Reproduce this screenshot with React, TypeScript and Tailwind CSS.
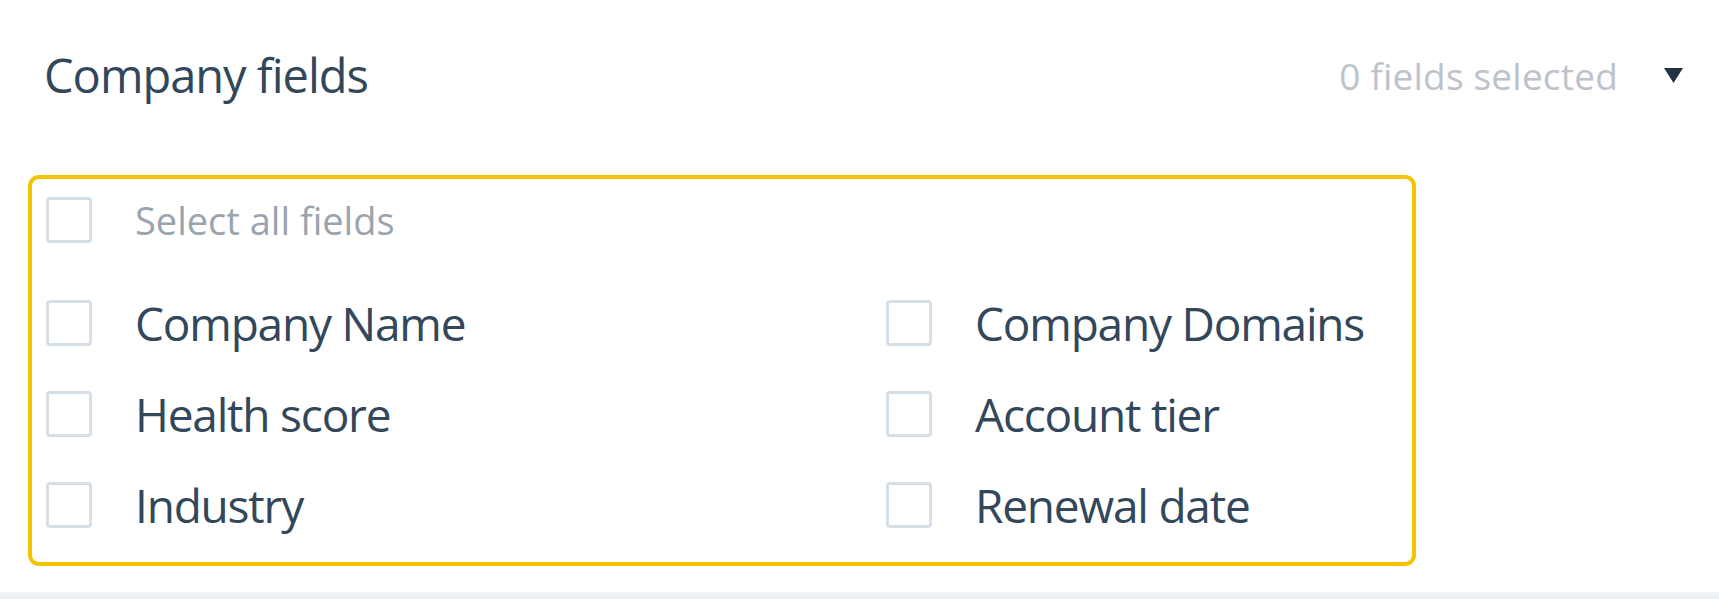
const leftFields = ['Company Name', 'Health score', 'Industry'];
const rightFields = ['Company Domains', 'Account tier', 'Renewal date'];

function Box() {
  return <span className="block h-[46px] w-[46px] shrink-0 rounded-[4px] border-[3px] border-[#d6dee7] bg-white" />;
}

function FieldRow({ label }: { label: string }) {
  return (
    <label className="flex h-[46px] items-center gap-[43px]">
      <Box />
      <span className="text-[46px] leading-none tracking-[-1.2px] text-[#33475b]">{label}</span>
    </label>
  );
}

export default function App() {
  return (
    <div className="flex h-[599px] w-full flex-col bg-white font-['Open_Sans',sans-serif]">
      <div className="flex h-[150px] items-center justify-between pl-[44px] pr-[36px]">
        <h2 className="text-[47px] font-normal leading-none tracking-[-1px] text-[#33475b]">Company fields</h2>
        <div className="flex items-center gap-[46px]">
          <span className="text-[37px] leading-none tracking-[0.2px] text-[#bcc3cc]">0 fields selected</span>
          <svg width="19" height="15" viewBox="0 0 19 15">
            <polygon points="0,0 19,0 9.5,15" fill="#213343" />
          </svg>
        </div>
      </div>

      <div className="ml-[28px] mt-[25px] w-[1388px] rounded-[11px] border-4 border-[#f5c400] pb-[34px] pl-[14px] pt-[18px]">
        <label className="flex h-[46px] items-center gap-[43px]">
          <Box />
          <span className="text-[38px] leading-none tracking-[0px] text-[#9aa4ae]">Select all fields</span>
        </label>
        <div className="mt-[57px] grid grid-cols-[840px_1fr] gap-y-[45px]">
          {leftFields.map((f, i) => (
            <div key={f} className="contents">
              <FieldRow label={f} />
              <FieldRow label={rightFields[i]} />
            </div>
          ))}
        </div>
      </div>

      <div className="flex-1" />
      <div className="h-[7px] bg-gradient-to-b from-[#f2f4f7] to-[#e9edf2]" />
    </div>
  );
}
